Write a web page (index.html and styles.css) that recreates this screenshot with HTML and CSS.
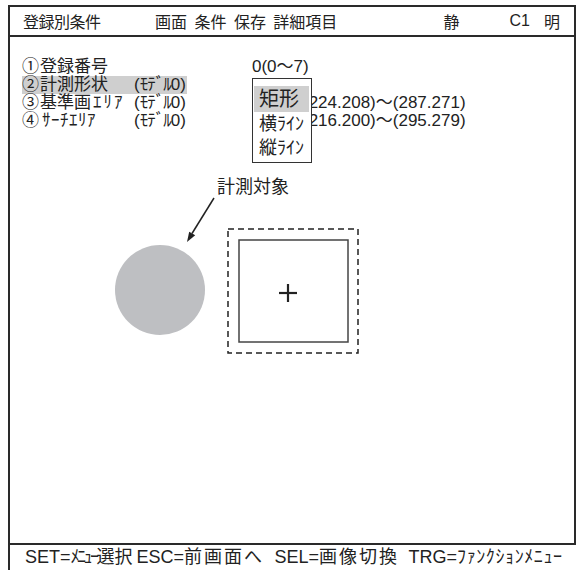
FILE: index.html
```html
<!DOCTYPE html>
<html lang="ja">
<head>
    <meta charset="UTF-8">
    <meta name="viewport" content="width=device-width, initial-scale=1.0">
    <title>登録別条件</title>
    <link rel="stylesheet" href="styles.css">
</head>
<body>

    <div class="screen">
        <div class="panel">
            <div class="header">
                <span class="h-title">登録別条件</span>
                <span class="h-menu">画面 条件 保存 詳細項目</span>
                <span class="h-mode">静</span>
                <span class="h-cam">C1</span>
                <span class="h-light">明</span>
            </div>

            <div class="main">
                <div class="list">
                    <div class="row">
                        <div class="item"><span class="label"><span class="num">①</span>登録番号</span></div>
                        <div class="value">0(0〜7)</div>
                    </div>
                    <div class="row">
                        <div class="item">
                            <span class="hl"><span class="label"><span class="num">②</span>計測形状</span><span class="model">(<span class="hw">ﾓﾃﾞﾙ</span>0)</span></span>
                        </div>
                    </div>
                    <div class="row">
                        <div class="item"><span class="label"><span class="num">③</span>基準画<span class="hw wide">ｴﾘｱ</span></span><span class="model">(<span class="hw">ﾓﾃﾞﾙ</span>0)</span></div>
                        <div class="value coords">(224.208)〜(287.271)</div>
                    </div>
                    <div class="row">
                        <div class="item"><span class="label"><span class="num">④</span><span class="hs">ｻｰﾁｴﾘｱ</span></span><span class="model">(<span class="hw">ﾓﾃﾞﾙ</span>0)</span></div>
                        <div class="value coords">(216.200)〜(295.279)</div>
                    </div>
                </div>

                <!-- shape select menu -->
                <div class="popup">
                    <div class="opt big selected">矩形</div>
                    <div class="opt">横ﾗｲﾝ</div>
                    <div class="opt">縦ﾗｲﾝ</div>
                </div>

                <svg class="figure" width="565" height="200" viewBox="0 0 565 200">
                    <text x="207" y="23" class="fig-label">計測対象</text>
                    <line x1="204" y1="28" x2="182" y2="63.5" stroke="#222" stroke-width="1.5"/>
                    <polygon points="177,72 185.2,65.3 179.2,61.7" fill="#222"/>
                    <circle cx="150" cy="120" r="45" fill="#bebfc2"/>
                    <rect x="218" y="59" width="130" height="124" fill="none" stroke="#222" stroke-width="1.5" stroke-dasharray="6 4"/>
                    <rect x="229" y="70" width="109" height="102" fill="none" stroke="#444" stroke-width="1.5"/>
                    <line x1="269" y1="123" x2="287" y2="123" stroke="#222" stroke-width="2.2"/>
                    <line x1="278" y1="114" x2="278" y2="132" stroke="#222" stroke-width="2.2"/>
                </svg>
            </div>
        </div>

        <div class="footer">
            <span class="f-set">SET=<span class="hw2">ﾒﾆｭｰ</span>選択</span>
            <span class="f-esc">ESC=<span class="sp">前画面へ</span></span>
            <span class="f-sel">SEL=<span class="sp">画像切換</span></span>
            <span class="f-trg">TRG=<span class="hw3">ﾌｧﾝｸｼｮﾝﾒﾆｭｰ</span></span>
        </div>
    </div>

</body>
</html>
```

FILE: styles.css
```css
body {
    margin: 0;
    background-color: #fff;
    color: #222;
    font-family: "Liberation Sans", "Noto Sans CJK JP", sans-serif;
}
.screen {
    margin: 5px 0 0 8px;
    width: 568px;
}
.panel {
    border: 2px solid #2a2a2a;
    border-bottom: none;
}
.header {
    display: flex;
    align-items: center;
    height: 28px;
    padding: 0 14px 0 13px;
    border-bottom: 2px solid #2a2a2a;
    font-size: 16px;
    white-space: nowrap;
}
.h-title {
    width: 132px;
    letter-spacing: -0.5px;
}
.h-menu {
    flex: 1;
    word-spacing: 3px;
}
.h-mode {
    margin-right: 50px;
}
.h-cam {
    margin-right: 14px;
}
.main {
    position: relative;
    height: 506px;
}
.list {
    padding: 21px 12px 0 12px;
    font-size: 17px;
}
.row {
    display: flex;
    height: 18px;
    line-height: 18px;
}
.item {
    display: flex;
    width: 230px;
}
.label {
    width: 112px;
    white-space: nowrap;
}
.num {
    letter-spacing: 1px;
}
.hl {
    display: flex;
    background-color: #cfcfcf;
    padding-right: 1px;
}
.model {
    white-space: nowrap;
}
.hw {
    letter-spacing: -1px;
}
.hw.wide {
    letter-spacing: 2px;
    margin-left: 2px;
}
.hs {
    margin-left: 2px;
    letter-spacing: 0.5px;
}
.value.coords {
    margin-left: 51px;
}
.popup {
    position: absolute;
    left: 242px;
    top: 41px;
    width: 60px;
    height: 85px;
    padding: 7px 2px 0 1px;
    box-sizing: border-box;
    border: 1px solid #333;
    background-color: #fff;
    font-size: 18px;
}
.opt {
    height: 24px;
    line-height: 24px;
    padding-left: 5px;
    white-space: nowrap;
}
.opt.big {
    font-size: 20px;
    height: 26px;
    line-height: 26px;
}
.selected {
    background-color: #cfcfcf;
}
.figure {
    display: block;
    margin-top: 40px;
}
.fig-label {
    font-size: 18px;
    fill: #222;
}
.footer {
    display: flex;
    border-top: 2px solid #2a2a2a;
    border-left: 2px solid #2a2a2a;
    height: 25px;
    line-height: 25px;
    padding-left: 15px;
    font-size: 18px;
    white-space: nowrap;
}
.f-set {
    margin-right: 4px;
}
.f-esc {
    width: 138px;
}
.f-sel {
    width: 134px;
}
.sp {
    letter-spacing: 2px;
}
.hw2 {
    letter-spacing: -2.5px;
}
.hw3 {
    letter-spacing: 0.6px;
}
```
